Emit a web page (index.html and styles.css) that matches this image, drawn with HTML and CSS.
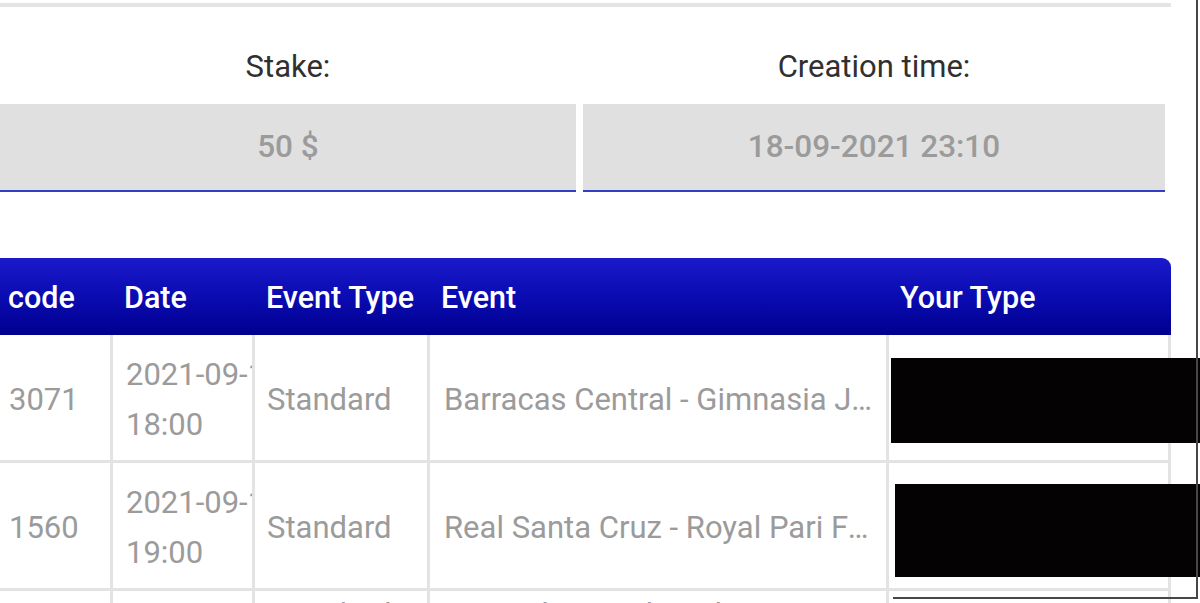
FILE: index.html
```html
<!DOCTYPE html>
<html lang="en">
<head>
<meta charset="utf-8">
<title>Bet details</title>
<link rel="stylesheet" href="styles.css">
</head>
<body>
<div class="page">
  <div class="top-rule"></div>

  <div class="summary">
    <div class="field">
      <div class="field-label">Stake:</div>
      <div class="field-value">50 $</div>
    </div>
    <div class="field field-wide">
      <div class="field-label">Creation time:</div>
      <div class="field-value">18-09-2021 23:10</div>
    </div>
  </div>

  <div class="grid-table">
    <div class="thead">
      <div class="th">code</div>
      <div class="th">Date</div>
      <div class="th">Event Type</div>
      <div class="th">Event</div>
      <div class="th th-type">Your Type</div>
    </div>

    <div class="tr">
      <div class="td td-first">3071</div>
      <div class="td td-date"><span class="d-line">2021-09-18</span><span class="d-line">18:00</span></div>
      <div class="td">Standard</div>
      <div class="td td-event">Barracas Central - Gimnasia Jujuy</div>
      <div class="td td-last"></div>
    </div>

    <div class="tr">
      <div class="td td-first">1560</div>
      <div class="td td-date"><span class="d-line">2021-09-18</span><span class="d-line">19:00</span></div>
      <div class="td">Standard</div>
      <div class="td td-event">Real Santa Cruz - Royal Pari Futbol Club</div>
      <div class="td td-last"></div>
    </div>

    <div class="tr tr-peek">
      <div class="td td-first">1559</div>
      <div class="td td-date"><span class="d-line">.</span></div>
      <div class="td">Standard</div>
      <div class="td td-event">Arsenal Sarandi - Atletico Tucuman</div>
      <div class="td td-last"></div>
    </div>
  </div>

  <div class="redact redact-1"></div>
  <div class="redact redact-2"></div>
  <div class="frame-v"></div>
  <div class="frame-h"></div>
</div>
</body>
</html>
```

FILE: styles.css
```css
* {
  box-sizing: border-box;
}

html, body {
  margin: 0;
  padding: 0;
  background: #ffffff;
  overflow: hidden;
}

body {
  font-family: Roboto, "Liberation Sans", Arial, sans-serif;
  width: 1200px;
  height: 603px;
}

.page {
  position: relative;
  width: 1200px;
  height: 603px;
  overflow: hidden;
}

.top-rule {
  margin-top: 3px;
  width: 1171px;
  height: 4px;
  background: #e4e4e4;
}

.summary {
  display: grid;
  grid-template-columns: 576px 582px;
  column-gap: 7px;
  margin-top: 40px;
}

.field-label {
  height: 40px;
  line-height: 40px;
  text-align: center;
  font-size: 31px;
  color: #303030;
}

.field-value {
  margin-top: 17px;
  height: 88px;
  line-height: 85px;
  text-align: center;
  font-size: 31.5px;
  font-weight: 500;
  color: #9b9b9b;
  background: #e0e0e0;
  border-bottom: 2px solid #2f3fc8;
}

.grid-table {
  margin-top: 66px;
  width: 1171px;
}

.thead,
.tr {
  display: grid;
  grid-template-columns: 110px 142px 175px 459px 285px;
}

.thead {
  height: 77px;
  padding-top: 2px;
  background: linear-gradient(to bottom, #1a1acb 0%, #0b0bb2 50%, #00008e 100%);
  border-top-right-radius: 9px;
  align-items: center;
}

.th {
  color: #ffffff;
  font-size: 30.5px;
  font-weight: 500;
  padding-left: 14px;
  white-space: nowrap;
}

.th:first-child {
  padding-left: 8px;
}

.tr {
  height: 128px;
}

.td {
  display: flex;
  align-items: center;
  border-left: 3px solid #e3e3e3;
  border-bottom: 3px solid #e3e3e3;
  padding: 4px 12px 0;
  font-size: 31px;
  color: #9b9b9b;
  overflow: hidden;
  white-space: nowrap;
}

.td-first {
  border-left: none;
  padding-left: 9px;
}

.td-last {
  border-right: 3px solid #e3e3e3;
}

.td-date {
  flex-direction: column;
  align-items: flex-start;
  justify-content: center;
  padding-left: 13px;
  padding-right: 0;
}

.d-line {
  display: block;
  line-height: 50px;
  white-space: nowrap;
}

.td-event {
  display: block;
  line-height: 122px;
  text-overflow: ellipsis;
  padding-left: 14px;
  padding-right: 4px;
}

.tr-peek .td {
  align-items: flex-start;
  padding-top: 9px;
  line-height: 30px;
}

.tr-peek .td-event {
  line-height: 30px;
}

.tr-peek .d-line {
  line-height: 30px;
}

.redact {
  position: absolute;
  background: #050203;
}

.redact-1 {
  left: 891px;
  top: 358px;
  width: 309px;
  height: 85px;
}

.redact-2 {
  left: 895px;
  top: 484px;
  width: 305px;
  height: 93px;
}

.frame-v {
  position: absolute;
  left: 1196px;
  top: 0;
  width: 2px;
  height: 599px;
  background: #474747;
}

.frame-h {
  position: absolute;
  left: 893px;
  top: 597px;
  width: 305px;
  height: 2px;
  background: #474747;
}
```
